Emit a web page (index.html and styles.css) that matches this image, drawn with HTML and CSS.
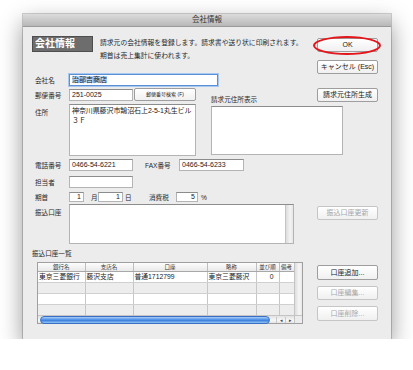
FILE: index.html
```html
<!DOCTYPE html>
<html lang="ja">
<head>
  <meta charset="UTF-8" />
  <title>会社情報</title>
  <link rel="stylesheet" href="styles.css">
</head>
<body>
  <div class="window">
    <div class="titlebar">会社情報</div>

    <div class="content">
      <div class="main">
        <div class="intro">
          <div class="heading">会社情報</div>
          <div class="desc">請求元の会社情報を登録します。請求書や送り状に印刷されます。<br>期首は売上集計に使われます。</div>
        </div>

        <div class="row r-name">
          <span class="label">会社名</span>
          <div class="field focus w-name"><span class="sel">治部吉商店</span></div>
        </div>

        <div class="addr-block">
          <div class="addr-left">
            <div class="row r-zip">
              <span class="label">郵便番号</span>
              <div class="field w-short">251-0025</div>
              <div class="btn btn-zip">郵便番号検索 (F)</div>
            </div>
            <div class="row top r-addr">
              <span class="label">住所</span>
              <div class="field area w-addr">
                <div class="line">神奈川県藤沢市鵠沼石上2-5-1丸生ビル</div>
                <div class="line">３Ｆ</div>
              </div>
            </div>
          </div>
          <div class="addr-right">
            <div class="caption">請求元住所表示</div>
            <div class="field area w-disp"></div>
          </div>
        </div>

        <div class="row r-tel">
          <span class="label">電話番号</span>
          <div class="field w-short">0466-54-6221</div>
          <span class="label fax">FAX番号</span>
          <div class="field w-fax">0466-54-6233</div>
        </div>

        <div class="row r-staff">
          <span class="label">担当者</span>
          <div class="field w-short"></div>
        </div>

        <div class="row r-term">
          <span class="label">期首</span>
          <div class="field num w-month">1</div>
          <span class="unit u-month">月</span>
          <div class="field num w-day">1</div>
          <span class="unit u-day">日</span>
          <span class="unit u-tax">消費税</span>
          <div class="field num w-tax">5</div>
          <span class="unit u-pct">%</span>
        </div>

        <div class="row top r-bank">
          <span class="label">振込口座</span>
          <div class="field area w-bank">
            <div class="vscroll"></div>
          </div>
        </div>

        <div class="list-caption">振込口座一覧</div>

        <div class="grid-wrap">
          <table class="accounts">
            <colgroup>
              <col style="width:47px"><col style="width:48px"><col style="width:74px">
              <col style="width:49px"><col style="width:23px"><col style="width:15px">
            </colgroup>
            <thead>
              <tr><th>銀行名</th><th>支店名</th><th>口座</th><th>略称</th><th>並び順</th><th>備考</th></tr>
            </thead>
            <tbody>
              <tr><td>東京三菱銀行</td><td>藤沢支店</td><td>普通1712799</td><td>東京三菱藤沢</td><td class="right">0</td><td></td></tr>
              <tr class="odd"><td></td><td></td><td></td><td></td><td></td><td></td></tr>
              <tr><td></td><td></td><td></td><td></td><td></td><td></td></tr>
              <tr class="odd"><td></td><td></td><td></td><td></td><td></td><td></td></tr>
            </tbody>
          </table>
          <div class="table-vscroll"></div>
          <div class="hscroll">
            <div class="thumb"></div>
            <div class="arrows"><span>◂</span><span>▸</span></div>
          </div>
          <div class="corner"></div>
        </div>
      </div>

      <div class="side">
        <div class="btn b-ok">OK<span class="circle"></span></div>
        <div class="btn b-cancel">キャンセル (Esc)</div>
        <div class="btn b-gen">請求元住所生成</div>
        <div class="btn disabled b-update">振込口座更新</div>
        <div class="btn b-add">口座追加...</div>
        <div class="btn disabled b-edit">口座編集...</div>
        <div class="btn disabled b-del">口座削除...</div>
      </div>
    </div>
  </div>
</body>
</html>
```

FILE: styles.css
```css
body {
  margin: 0;
  background: #fff;
  font-family: "Liberation Sans", "Noto Sans CJK JP", sans-serif;
  font-size: 7px;
  color: #1a1a1a;
}

.window {
  margin: 14px 0 0 23px;
  width: 368px;
  height: 325px;
  background: #ececec;
  box-shadow: 0 0 0 1px rgba(0,0,0,0.18), 0 9px 22px rgba(0,0,0,0.42);
}

.titlebar {
  height: 12px;
  line-height: 12px;
  text-align: center;
  font-size: 7.5px;
  color: #333;
  background: linear-gradient(#dcdcdc, #b8b8b8);
  border-bottom: 1px solid #9a9a9a;
}

.content {
  display: flex;
  padding: 9px 0 0 9px;
}

.main {
  width: 271px;
  flex-shrink: 0;
}

/* header */
.intro {
  display: flex;
  height: 26px;
}

.heading {
  width: 57px;
  height: 14px;
  line-height: 14px;
  padding-left: 2px;
  background: #6d6d6d;
  border: 1px solid #4e4e4e;
  color: #fff;
  font-weight: bold;
  font-size: 10px;
}

.desc {
  margin-left: 7px;
  line-height: 13px;
  font-size: 6.8px;
  white-space: nowrap;
  color: #2a2a2a;
}

/* form rows */
.row {
  display: flex;
  align-items: center;
}

.row.top {
  align-items: flex-start;
}

.label {
  width: 34px;
  padding-left: 3px;
  flex-shrink: 0;
  color: #2a2a2a;
  font-size: 6.6px;
}

.row.top .label {
  padding-top: 3px;
}

.field {
  box-sizing: border-box;
  height: 12px;
  line-height: 10px;
  padding: 0 2px;
  background: #fff;
  border: 1px solid #b4b4b4;
  border-top-color: #8c8c8c;
  white-space: nowrap;
  overflow: hidden;
}

.field.area {
  line-height: 10px;
  padding-top: 1px;
  position: relative;
}

.field.num {
  text-align: right;
  height: 10px;
  line-height: 8px;
}

.field.focus {
  border-color: #5b8fd6;
  box-shadow: 0 0 0 1px #a9c8f0;
}

.sel {
  background: #b5d3f8;
}

.line {
  letter-spacing: -0.1px;
}

.w-name { width: 149px; }
.w-short { width: 64px; }
.w-fax { width: 65px; }
.w-addr { width: 127px; height: 52px; }
.w-disp { width: 132px; height: 49px; }
.w-bank { width: 225px; height: 40px; }
.w-month { width: 15px; }
.w-day { width: 25px; }
.w-tax { width: 22px; }

.r-name { margin-top: 12px; }

.addr-block {
  display: flex;
  margin-top: 2px;
}

.addr-left { width: 164px; }
.r-zip { height: 13px; }
.r-addr { margin-top: 3px; }

.addr-right {
  margin-left: 15px;
}

.caption {
  margin-top: 6px;
  line-height: 12px;
  font-size: 6.6px;
  color: #2a2a2a;
}

.r-tel { margin-top: 3px; }
.label.fax { margin-left: 9px; width: 34px; }
.r-staff { margin-top: 5px; }
.r-term { margin-top: 4px; height: 10px; }
.r-bank { margin-top: 2px; }

.unit {
  color: #2a2a2a;
  font-size: 6.6px;
}
.u-month { margin-left: 7px; width: 7px; }
.u-day { margin-left: 2px; width: 7px; }
.u-tax { margin-left: 17px; width: 27px; }
.u-pct { margin-left: 3px; }

.vscroll {
  position: absolute;
  top: 0;
  right: 0;
  bottom: 0;
  width: 7px;
  background: linear-gradient(90deg, #dcdcdc, #f4f4f4 60%, #e6e6e6);
  border-left: 1px solid #c4c4c4;
}

.list-caption {
  margin-top: 5px;
  line-height: 10px;
  font-size: 6.6px;
  color: #2a2a2a;
}

/* account table */
.grid-wrap {
  margin: 3px 0 0 5px;
  width: 264px;
  display: grid;
  grid-template-columns: 256px 8px;
  grid-template-rows: 52px 8px;
  border: 1px solid #a0a0a0;
  background: #fff;
}

.accounts {
  border-collapse: collapse;
  table-layout: fixed;
  width: 256px;
  font-size: 6.8px;
}

.accounts th {
  height: 7px;
  padding: 0;
  font-size: 5.5px;
  font-weight: normal;
  color: #333;
  background: linear-gradient(#fdfdfd, #e9e9e9);
  border-right: 1px solid #bdbdbd;
  border-bottom: 1px solid #a8a8a8;
  overflow: hidden;
  white-space: nowrap;
}

.accounts td {
  height: 10px;
  padding: 0 1px;
  border-right: 1px solid #c6c6c6;
  border-bottom: 1px solid #d0d0d0;
  white-space: nowrap;
  overflow: hidden;
  line-height: 10px;
}

.accounts tr.odd td {
  background: #ededed;
}

.accounts td.right {
  text-align: right;
  padding-right: 5px;
}

.table-vscroll {
  background: linear-gradient(90deg, #dedede, #f6f6f6 60%, #e8e8e8);
  border-left: 1px solid #c4c4c4;
}

.hscroll {
  display: flex;
  align-items: center;
  background: linear-gradient(#e2e2e2, #f8f8f8 60%, #e4e4e4);
  border-top: 1px solid #c4c4c4;
}

.thumb {
  margin-left: 2px;
  width: 231px;
  height: 6px;
  border-radius: 4px;
  border: 1px solid #3a6fc4;
  background: linear-gradient(#a9cdf7, #4f93e8 45%, #3b7fdc 55%, #93c4f6);
}

.arrows {
  margin-left: 6px;
  display: flex;
  font-size: 5px;
  color: #444;
}

.arrows span {
  width: 8px;
  text-align: center;
  border-left: 1px solid #c8c8c8;
}

.corner {
  background: #ececec;
  border-left: 1px solid #c4c4c4;
  border-top: 1px solid #c4c4c4;
}

/* buttons */
.side {
  margin-left: 14px;
  width: 61px;
  display: flex;
  flex-direction: column;
}

.btn {
  box-sizing: border-box;
  height: 14px;
  line-height: 12px;
  text-align: center;
  font-size: 7px;
  color: #222;
  background: linear-gradient(#ffffff, #f0f0f0);
  border: 1px solid #9e9e9e;
  border-radius: 2px;
  white-space: nowrap;
  position: relative;
}

.btn.disabled {
  color: #a8a8a8;
  border-color: #c6c6c6;
}

.btn-zip {
  margin-left: 1px;
  width: 62px;
  height: 13px;
  line-height: 11px;
  font-size: 5px;
}

.b-ok { margin-top: 2px; }
.b-cancel { margin-top: 8px; }
.b-gen { margin-top: 14px; }
.b-update { margin-top: 104px; }
.b-add { margin-top: 45px; height: 15px; line-height: 13px; }
.b-edit { margin-top: 6px; }
.b-del { margin-top: 6px; height: 15px; line-height: 13px; }

.circle {
  position: absolute;
  left: -5px;
  top: -3px;
  width: 68px;
  height: 19px;
  box-sizing: border-box;
  border: 2px solid #e3161b;
  border-radius: 50%;
}
```
